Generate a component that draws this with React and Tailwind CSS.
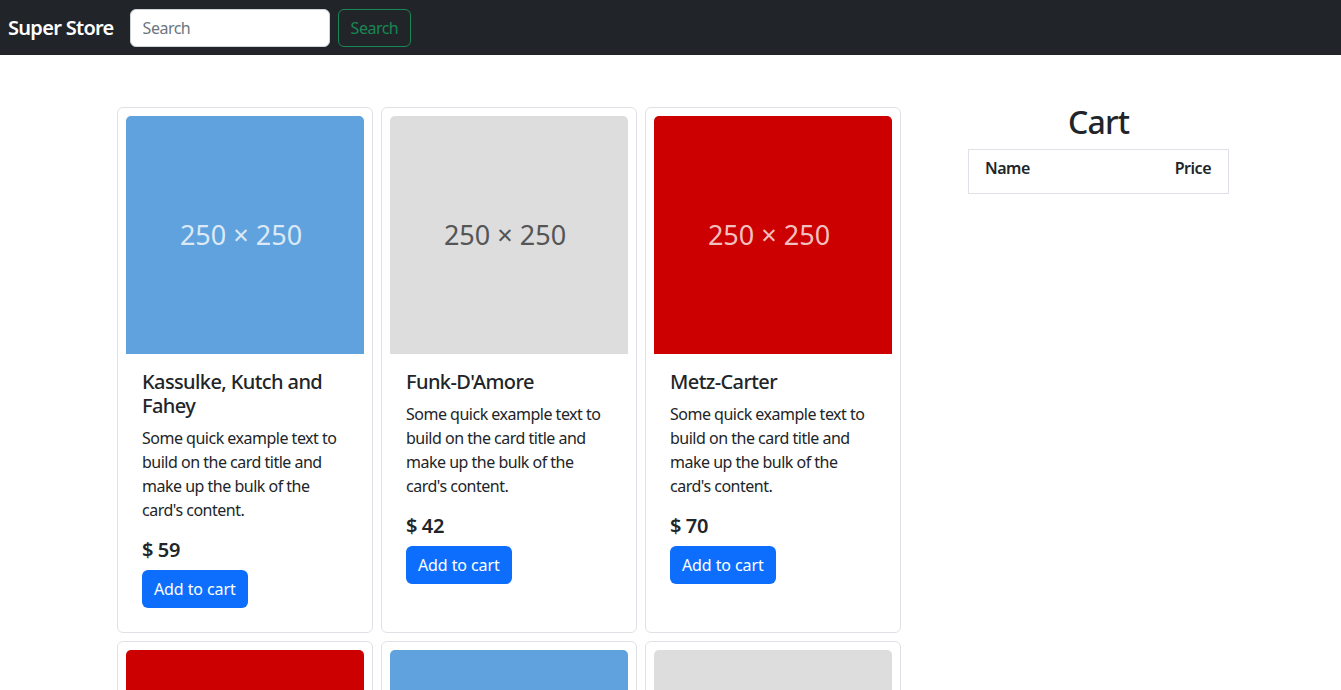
import React from 'react'

const products = [
  { name: 'Kassulke, Kutch and Fahey', price: 59, bg: 'bg-[#5fa2dd]', fg: 'text-[#dbe9f7]' },
  { name: "Funk-D'Amore", price: 42, bg: 'bg-[#dddddd]', fg: 'text-[#555555]' },
  { name: 'Metz-Carter', price: 70, bg: 'bg-[#cc0000]', fg: 'text-[#f2bfbf]' },
  { name: 'Hintz LLC', price: 31, bg: 'bg-[#cc0000]', fg: 'text-[#f2bfbf]' },
  { name: 'Ward Group', price: 88, bg: 'bg-[#5fa2dd]', fg: 'text-[#dbe9f7]' },
  { name: 'Bode Inc', price: 17, bg: 'bg-[#dddddd]', fg: 'text-[#555555]' },
]

const ProductCard = ({ product }) => (
  <div className="flex flex-col rounded-md border border-[#dee2e6] bg-white p-2">
    <div className={`flex h-[238px] items-center justify-center rounded-t-[5px] pr-2 ${product.bg}`}>
      <span className={`text-[27px] tracking-normal ${product.fg}`}>250 × 250</span>
    </div>
    <div className="p-4">
      <h5 className="mb-2 text-xl leading-6 font-medium tracking-[-0.6px] text-[#212529]">{product.name}</h5>
      <p className="mb-4 text-base leading-6 tracking-[-0.5px] text-[#212529]">
        Some quick example text to build on the card title and make up the bulk of the card's content.
      </p>
      <h5 className="mb-2 text-xl leading-6 font-semibold tracking-[-0.4px] text-[#212529]">$ {product.price}</h5>
      <button className="h-[38px] rounded-md bg-[#0d6efd] px-3 text-base tracking-[-0.1px] text-white">
        Add to cart
      </button>
    </div>
  </div>
)

export default function App() {
  return (
    <div className="min-h-screen bg-white font-['Noto_Sans',sans-serif] text-[#212529]">
      <nav className="flex h-[55px] items-center bg-[#212529] px-2">
        <span className="mr-4 text-xl font-semibold tracking-[-0.7px] text-white">Super Store</span>
        <input
          className="h-[38px] w-[200px] rounded-md border border-[#ced4da] bg-white px-3 text-base tracking-[-0.5px] outline-none placeholder:text-[#6c757d]"
          placeholder="Search"
        />
        <button className="ml-2 h-[38px] rounded-md border border-[#198754] px-3 text-base tracking-[-0.5px] text-[#198754]">
          Search
        </button>
      </nav>

      <main className="flex items-start pt-[52px] pl-[117px]">
        <div className="grid w-[784px] grid-cols-3 gap-2">
          {products.map((p) => (
            <ProductCard key={p.name} product={p} />
          ))}
        </div>

        <aside className="mt-[-4px] ml-[67px] w-[261px]">
          <h2 className="mb-2 text-center text-[32px] leading-[38px] font-medium tracking-[-0.8px]">Cart</h2>
          <div className="flex h-[45px] items-start justify-between border border-[#dee2e6] pt-[6px] pr-[17px] pl-4">
            <span className="text-base leading-6 font-semibold tracking-[-0.5px]">Name</span>
            <span className="text-base leading-6 font-semibold tracking-[-0.5px]">Price</span>
          </div>
        </aside>
      </main>
    </div>
  )
}
